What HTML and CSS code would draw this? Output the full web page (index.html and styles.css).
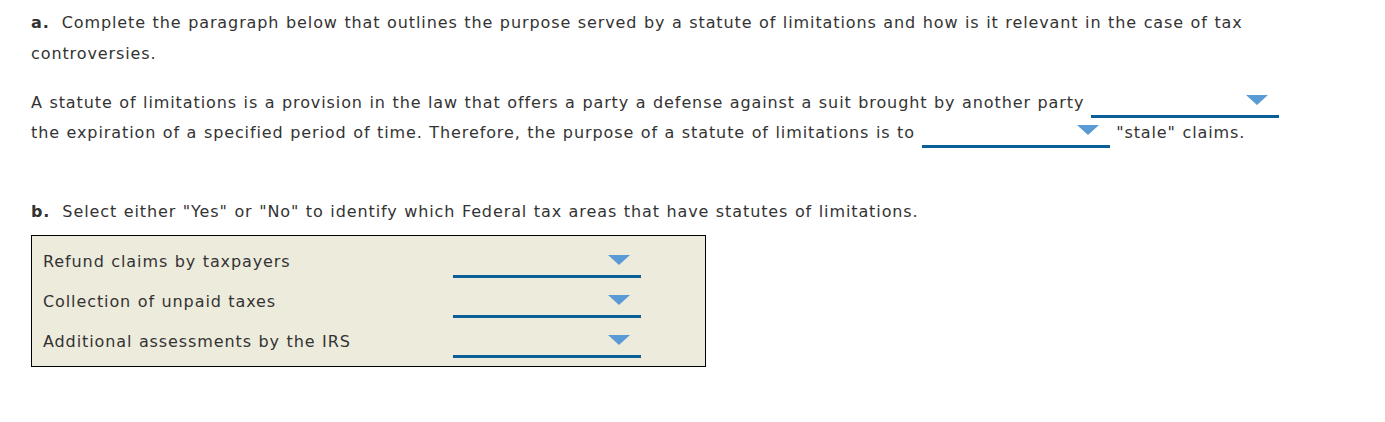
FILE: index.html
```html
<!DOCTYPE html>
<html>
<head>
<meta charset="utf-8">
<link rel="stylesheet" href="styles.css">
</head>
<body>
<div class="page">
  <p class="question"><b class="num">a.</b>Complete the paragraph below that outlines the purpose served by a statute of limitations and how is it relevant in the case of tax controversies.</p>
  <p class="para">A statute of limitations is a provision in the law that offers a party a defense against a suit brought by another party <span class="dd"><span class="arrow"></span></span> the expiration of a specified period of time. Therefore, the purpose of a statute of limitations is to <span class="dd"><span class="arrow"></span></span> "stale" claims.</p>
  <p class="question qb"><b class="num">b.</b>Select either "Yes" or "No" to identify which Federal tax areas that have statutes of limitations.</p>
  <div class="box">
    <div class="row"><span class="label">Refund claims by taxpayers</span><span class="dd"><span class="arrow"></span></span></div>
    <div class="row"><span class="label">Collection of unpaid taxes</span><span class="dd"><span class="arrow"></span></span></div>
    <div class="row"><span class="label">Additional assessments by the IRS</span><span class="dd"><span class="arrow"></span></span></div>
  </div>
</div>
</body>
</html>
```
FILE: styles.css
```css
html, body { margin: 0; padding: 0; background: #fff; }
body { font-family: "DejaVu Sans", Verdana, sans-serif; font-size: 16px; color: #333; letter-spacing: 0.9px; word-spacing: 0.6px; }
.page { padding: 7px 0 0 31px; width: 1262px; }
.question { margin: 0; line-height: 31px; }
.num { font-weight: bold; margin-right: 12px; }
.para { margin: 19px 0 0; line-height: 30px; }
.qb { margin-top: 48px; }
.dd {
  display: inline-block;
  position: relative;
  width: 188px;
  height: 22px;
  border-bottom: 3px solid #0b5f98;
  vertical-align: -10px;
}
.arrow {
  position: absolute;
  right: 11px;
  top: 2px;
  width: 0; height: 0;
  border-left: 11px solid transparent;
  border-right: 11px solid transparent;
  border-top: 10px solid #5b9bd5;
}
.box {
  margin-top: 8px;
  width: 662px;
  background: #edebdc;
  border: 1px solid #000;
  padding: 5px 0 5px 11px;
}
.row { display: flex; align-items: center; height: 40px; }
.label { width: 410px; flex: none; }
.row .dd { vertical-align: baseline; margin-top: 8px; }
```
